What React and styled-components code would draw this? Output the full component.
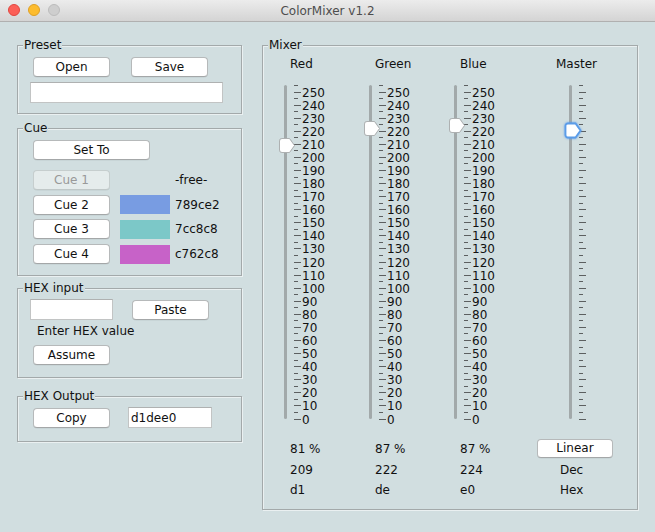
import React from 'react';
import styled, { createGlobalStyle } from 'styled-components';

const BG = '#d1dee0';
const FONT = '"DejaVu Sans", "Liberation Sans", sans-serif';

const Global = createGlobalStyle`
  html, body { margin: 0; padding: 0; background: ${BG}; }
  body { font-family: ${FONT}; font-size: 12px; color: #111; overflow: hidden; }
  * { box-sizing: border-box; }
`;

const Window = styled.div`
  width: 655px;
  height: 532px;
  background: ${BG};
  display: flex;
  flex-direction: column;
`;

const TitleBar = styled.div`
  height: 22px;
  flex: none;
  display: grid;
  grid-template-columns: 1fr auto 1fr;
  align-items: center;
  background: linear-gradient(#ececec, #d4d4d4);
  border-bottom: 1px solid #b0b0b0;
  color: #4d4d4d;
  font-size: 12px;
`;

const Lights = styled.div`
  display: flex;
  gap: 8px;
  padding-left: 8px;
  padding-bottom: 1px;
`;

const Light = styled.span`
  width: 12px;
  height: 12px;
  border-radius: 50%;
  background: ${(p) => p.$c};
  border: 1px solid ${(p) => p.$b};
`;

const Body = styled.div`
  display: flex;
  padding: 23px 0 0 17px;
  gap: 20px;
`;

const LeftCol = styled.div`
  width: 225px;
  display: flex;
  flex-direction: column;
`;

const Panel = styled.div`
  position: relative;
  height: ${(p) => p.$h}px;
  margin-top: ${(p) => p.$mt || 0}px;
  border: 1px solid #a3a9aa;
  box-shadow: inset 1px 1px 0 rgba(255, 255, 255, 0.55), 1px 1px 0 rgba(255, 255, 255, 0.55);
  padding: ${(p) => p.$pad};
  display: flex;
  flex-direction: column;
`;

const PanelTitle = styled.span`
  position: absolute;
  top: -8px;
  left: 5px;
  padding: 0 1px;
  background: ${BG};
  line-height: 15px;
  font-size: 12px;
  color: #111;
`;

const Row = styled.div`
  display: flex;
  align-items: center;
  gap: ${(p) => p.$gap || 0}px;
  padding-left: ${(p) => p.$pl || 0}px;
  margin-top: ${(p) => p.$mt || 0}px;
  height: ${(p) => (p.$h ? `${p.$h}px` : 'auto')};
`;

const Button = styled.div`
  width: ${(p) => p.$w}px;
  height: ${(p) => p.$h || 20}px;
  margin-left: ${(p) => p.$ml || 0}px;
  margin-top: ${(p) => p.$mt || 0}px;
  flex: none;
  display: flex;
  align-items: center;
  justify-content: center;
  border-radius: 4px;
  font-size: 12px;
  background: ${(p) => (p.$disabled ? '#e5ecec' : '#ffffff')};
  color: ${(p) => (p.$disabled ? '#999' : '#111')};
  border: 1px solid ${(p) => (p.$disabled ? '#c6cece' : '#b6b9ba')};
  border-bottom-color: ${(p) => (p.$disabled ? '#c0c8c8' : '#a4a7a8')};
  box-shadow: 0 0.5px 0.5px rgba(0, 0, 0, 0.08);
`;

const TextField = styled.input`
  width: ${(p) => p.$w}px;
  height: 21px;
  margin-top: ${(p) => p.$mt || 0}px;
  margin-left: ${(p) => p.$ml || 0}px;
  flex: none;
  background: #fff;
  border: 1px solid #c2c4c4;
  border-top-color: #afb1b1;
  padding: 0 2px;
  font-family: ${FONT};
  font-size: 12px;
  color: #111;
  outline: none;
`;

const CueList = styled.div`
  display: flex;
  flex-direction: column;
  gap: 4.7px;
  margin-top: 10px;
  padding-left: 3px;
`;

const CueRow = styled.div`
  display: flex;
  align-items: center;
  height: 20px;
`;

const Swatch = styled.span`
  width: 50px;
  height: 19px;
  margin-left: 10px;
  flex: none;
  background: ${(p) => p.$color || 'transparent'};
`;

const CueHex = styled.span`
  margin-left: 5px;
  font-size: 12px;
`;

const Hint = styled.div`
  margin: 4px 0 0 7px;
  line-height: 15px;
`;

const Mixer = styled.div`
  position: relative;
  width: 376px;
  height: 465px;
  border: 1px solid #a3a9aa;
  box-shadow: inset 1px 1px 0 rgba(255, 255, 255, 0.55), 1px 1px 0 rgba(255, 255, 255, 0.55);
  padding: 8px 0 0 15px;
  display: flex;
`;

const Column = styled.div`
  width: ${(p) => p.$w}px;
  margin-left: ${(p) => p.$ml || 0}px;
  display: flex;
  flex-direction: column;
  flex: none;
`;

const ColLabel = styled.div`
  height: 20px;
  line-height: 20px;
  margin-left: ${(p) => p.$ml}px;
`;

const ValueRow = styled.div`
  height: 20.5px;
  line-height: 20.5px;
  margin-left: ${(p) => p.$ml || 0}px;
  display: flex;
  align-items: flex-start;
`;

const SliderBox = styled.div`
  position: relative;
  width: ${(p) => p.$w}px;
  height: 365px;
  margin-left: ${(p) => p.$ml || 0}px;
  flex: none;
`;

const Scale = styled.svg`
  position: absolute;
  left: 0;
  top: 0;
`;

const TickLabel = styled.span`
  position: absolute;
  left: 24px;
  font-size: 12px;
  line-height: 14px;
  color: #111;
`;

const Thumb = styled.svg`
  position: absolute;
  left: ${(p) => (p.$focus ? 2 : 1)}px;
  width: 16px;
  height: 15px;
  overflow: visible;
  filter: ${(p) =>
    p.$focus ? 'drop-shadow(0 0 1.2px rgba(80,150,235,0.9))' : 'drop-shadow(0 0.5px 0.5px rgba(0,0,0,0.15))'};
`;

const K = 1.3078;
const yOf = (v) => 344.5 - v * K;

function Slider({ value, labeled, focus, ml }) {
  const w = labeled ? 60 : 30;
  const ticks = [];
  for (let v = 0; v <= 255; v += 5) ticks.push(v);
  return (
    <SliderBox $w={w} $ml={ml}>
      <Scale width={w} height={365}>
        <rect x={6} y={11} width={3} height={334} rx={1.5} fill="#a2a9aa" />
        {ticks.map((v) => {
          const y = Math.round(yOf(v)) + 0.5;
          return (
            <line key={v} x1={16} x2={v % 10 === 0 ? 23 : 20} y1={y} y2={y} stroke="#5c5f60" strokeWidth={1} />
          );
        })}
      </Scale>
      {labeled &&
        ticks
          .filter((v) => v % 10 === 0)
          .map((v) => (
            <TickLabel key={v} style={{ top: `${Math.round(yOf(v)) - 6.5}px` }}>
              {v}
            </TickLabel>
          ))}
      <Thumb $focus={focus} viewBox="0 0 16 15" style={{ top: `${yOf(value) - 7.5}px` }}>
        <path
          d="M3 0.5 H10.5 L15.5 7.5 L10.5 14.5 H3 A2.5 2.5 0 0 1 0.5 12 V3 A2.5 2.5 0 0 1 3 0.5 Z"
          fill="#fff"
          stroke={focus ? '#5b9ce8' : '#aeb1b2'}
          strokeWidth={focus ? 1.8 : 1}
        />
      </Thumb>
    </SliderBox>
  );
}

const channels = [
  { name: 'Red', value: 209, pct: '81 %', hex: 'd1' },
  { name: 'Green', value: 222, pct: '87 %', hex: 'de' },
  { name: 'Blue', value: 224, pct: '87 %', hex: 'e0' },
];

const cues = [
  { label: 'Cue 1', disabled: true, text: '-free-' },
  { label: 'Cue 2', color: '#789ce2', text: '789ce2' },
  { label: 'Cue 3', color: '#7cc8c8', text: '7cc8c8' },
  { label: 'Cue 4', color: '#c762c8', text: 'c762c8' },
];

export default function App() {
  return (
    <Window>
      <Global />
      <TitleBar>
        <Lights>
          <Light $c="#fc5f57" $b="#e1463f" />
          <Light $c="#fdbc2e" $b="#dfa024" />
          <Light $c="#cecece" $b="#bcbcbc" />
        </Lights>
        <span>ColorMixer v1.2</span>
        <span />
      </TitleBar>
      <Body>
        <LeftCol>
          <Panel $h={69} $pad="11px 0 0 12px">
            <PanelTitle>Preset</PanelTitle>
            <Row $pl={3} $gap={21}>
              <Button $w={77}>Open</Button>
              <Button $w={77}>Save</Button>
            </Row>
            <TextField $w={193} $mt={5} readOnly defaultValue="" />
          </Panel>

          <Panel $h={148} $mt={14} $pad="11px 0 0 12px">
            <PanelTitle>Cue</PanelTitle>
            <Row $pl={3}>
              <Button $w={117}>Set To</Button>
            </Row>
            <CueList>
              {cues.map((c) => (
                <CueRow key={c.label}>
                  <Button $w={77} $disabled={c.disabled}>
                    {c.label}
                  </Button>
                  <Swatch $color={c.color} />
                  <CueHex>{c.text}</CueHex>
                </CueRow>
              ))}
            </CueList>
          </Panel>

          <Panel $h={90} $mt={12} $pad="10px 0 0 12px">
            <PanelTitle>HEX input</PanelTitle>
            <Row $h={21}>
              <TextField $w={83} readOnly defaultValue="" />
              <Button $w={77} $ml={19}>
                Paste
              </Button>
            </Row>
            <Hint>Enter HEX value</Hint>
            <Row $pl={3} $mt={6}>
              <Button $w={77}>Assume</Button>
            </Row>
          </Panel>

          <Panel $h={46} $mt={18} $pad="10px 0 0 15px">
            <PanelTitle>HEX Output</PanelTitle>
            <Row $h={21}>
              <Button $w={77}>Copy</Button>
              <TextField $w={84} $ml={18} readOnly defaultValue="d1dee0" />
            </Row>
          </Panel>
        </LeftCol>

        <Mixer>
          <PanelTitle>Mixer</PanelTitle>
          {channels.map((c) => (
            <Column key={c.name} $w={85}>
              <ColLabel $ml={12}>{c.name}</ColLabel>
              <Slider value={c.value} labeled />
              <ValueRow $ml={12}>{c.pct}</ValueRow>
              <ValueRow $ml={12}>{c.value}</ValueRow>
              <ValueRow $ml={12}>{c.hex}</ValueRow>
            </Column>
          ))}
          <Column $w={76} $ml={4}>
            <ColLabel $ml={19}>Master</ColLabel>
            <Slider value={220} focus ml={26} />
            <ValueRow>
              <Button $w={76} $h={19}>
                Linear
              </Button>
            </ValueRow>
            <ValueRow $ml={23}>Dec</ValueRow>
            <ValueRow $ml={23}>Hex</ValueRow>
          </Column>
        </Mixer>
      </Body>
    </Window>
  );
}
